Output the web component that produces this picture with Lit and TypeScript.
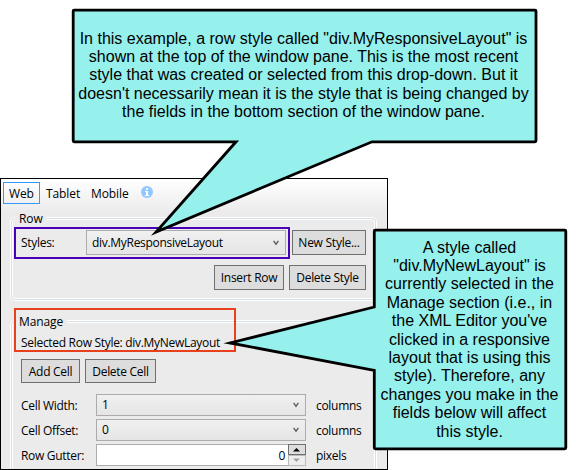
import { LitElement, html, css, svg } from "lit";
import { customElement, property } from "lit/decorators.js";

const topNote = [
  'In this example, a row style called "div.MyResponsiveLayout" is',
  "shown at the top of the window pane. This is the most recent",
  "style that was created or selected from this drop-down. But it",
  "doesn't necessarily mean it is the style that is being changed by",
  "the fields in the bottom section of the window pane.",
];
const sideNote = [
  "A style called",
  '"div.MyNewLayout" is',
  "currently selected in the",
  "Manage section (i.e., in",
  "the XML Editor you've",
  "clicked in a responsive",
  "layout that is using this",
  "style). Therefore, any",
  "changes you make in the",
  "fields below will affect",
  "this style.",
];

const bubbles = [
  "M74.2 10.2H535Q536 10.2 536 11.2V140.8Q536 141.8 535 141.8H372L156 232L236 141.8H74.2Q73.2 141.8 73.2 140.8V11.2Q73.2 10.2 74.2 10.2Z",
  "M375.300 230.2H564.800Q565.800 230.2 565.800 231.2V447.800Q565.800 448.800 564.800 448.800H375.300Q374.300 448.800 374.300 447.800V370.300L230 343L374.300 307V231.2Q374.300 230.2 375.300 230.2Z",
];

@customElement("drop-down")
class DropDown extends LitElement {
  @property() value = "";
  static styles = css`
    :host { display: flex; align-items: center; justify-content: space-between; box-sizing: border-box;
      border: 1px solid #acacac; background: linear-gradient(#f0f0f0, #e5e5e5); padding: 0 6px 0 5px; }
    svg { display: block; }
  `;
  render() {
    return html`<span>${this.value}</span><svg width="6" height="6" viewBox="0 0 6 6"><path d="M.6 .8 L3 4.2 L5.4 .8" fill="none" stroke="#606060" stroke-width="1.4"/></svg>`;
  }
}

@customElement("app-root")
class AppRoot extends LitElement {
  static styles = css`
    :host { display: block; position: relative; width: 576px; height: 470px; overflow: hidden; background: #fff;
      color: #000; font: 12px/16px "Open Sans", "Noto Sans", sans-serif; letter-spacing: -0.3px; white-space: nowrap; padding-top: 178px; box-sizing: border-box; }
    .window { box-sizing: border-box; width: 388px; height: 292px; border: 1px solid #000; overflow: hidden;
      background: linear-gradient(#fff, #ebebeb 34px); padding: 3px 11px 0 2px; }
    .tabs { display: flex; align-items: center; height: 22px; letter-spacing: -0.1px; }
    .tab { box-sizing: border-box; height: 22px; width: 45px; padding: 3px 5px 1px; border: 1px solid transparent; }
    .tab.on { border-color: #3399ff; width: 37px; }
    .info { margin-left: 11px; margin-top: -3px; }
    .group { position: relative; margin-left: 8px; border: 1px solid #d5dfe5; border-radius: 4px; box-shadow: inset 0 0 0 1px #fff, 0 0 0 1px #fff; box-sizing: border-box; width: 365px; }
    .row-group { height: 82px; margin-top: 14px; padding: 8px 9px 0 2px; }
    .manage { height: 170px; margin-top: 21px; padding: 8px 8px 0 9px; }
    .legend { position: absolute; left: 3px; top: -9px; padding: 0 4px; background: #ebebeb; line-height: 17px; letter-spacing: -0.1px; }
    .styles-row { display: flex; align-items: center; }
    .purple { box-sizing: border-box; width: 276px; height: 32px; border: 2px solid #4800b8; display: flex; padding: 1px 2px 0 5px; justify-content: space-between; line-height: 26px; }
    .purple drop-down { width: 200px; height: 25px; line-height: 16px; }
    button { font: inherit; letter-spacing: inherit; color: inherit; box-sizing: border-box; height: 25px; padding: 1px 0 0; border: 1px solid #707070; background: #ddd; flex: none; }
    .new { width: 74px; margin-left: 2px; margin-top: -1px; letter-spacing: -0.25px; }
    .actions { display: flex; justify-content: flex-end; gap: 5px; margin-top: 6px; }
    .insert { width: 70px; }
    .delete { width: 77px; }
    .selected { margin-top: 5px; }
    .cells { display: flex; gap: 5px; margin-top: 8px; }
    .cells button { height: 24px; }
    .add { width: 59px; }
    .remove { width: 71px; }
    .fields { margin-top: 11px; }
    .field { display: grid; grid-template-columns: 75px 210px 60px; height: 22px; margin-bottom: 3px; line-height: 24px; }
    .field drop-down { height: 22px; line-height: 22px; }
    .unit { padding-left: 10px; }
    .number { box-sizing: border-box; height: 22px; border: 1px solid #acacac; background: #fff; display: flex; justify-content: flex-end; line-height: 22px; }
    .number svg { margin: -1px -1px 0 3px; display: block; }
    .red { position: absolute; left: 14px; top: 308px; width: 222px; height: 44px; border: 2px solid #e8401c; box-sizing: border-box; }
    .bubbles { position: absolute; left: 0; top: 0; }
    .note { position: absolute; font: 16px/18.4px "Liberation Sans", Arial, sans-serif; letter-spacing: 0; text-align: center; }
    .top { left: 74px; top: 29.5px; width: 459px; }
    .side { left: 375px; top: 238.5px; width: 189px; }
  `;

  render() {
    return html`
      <div class="window">
        <div class="tabs">
          <div class="tab on">Web</div><div class="tab">Tablet</div><div class="tab">Mobile</div>
          <svg class="info" width="12" height="12" viewBox="0 0 12 12"><circle cx="6" cy="6" r="6" fill="#90c8ff"/><path d="M5 2h2v2H5z M4 5h3v4h1v1H4V9h1V6H4z" fill="#fff"/></svg>
        </div>
        <div class="group row-group">
          <span class="legend">Row</span>
          <div class="styles-row">
            <div class="purple"><span>Styles:</span><drop-down value="div.MyResponsiveLayout"></drop-down></div>
            <button class="new">New Style...</button>
          </div>
          <div class="actions"><button class="insert">Insert Row</button><button class="delete">Delete Style</button></div>
        </div>
        <div class="group manage">
          <span class="legend">Manage</span>
          <div class="selected">Selected Row Style: div.MyNewLayout</div>
          <div class="cells"><button class="add">Add Cell</button><button class="remove">Delete Cell</button></div>
          <div class="fields">
            <div class="field"><span>Cell Width:</span><drop-down value="1"></drop-down><span class="unit">columns</span></div>
            <div class="field"><span>Cell Offset:</span><drop-down value="0"></drop-down><span class="unit">columns</span></div>
            <div class="field"><span>Row Gutter:</span>
              <div class="number">0<svg width="18" height="22" viewBox="0 0 18 22"><rect x=".5" y=".5" width="17" height="10" fill="#ddd" stroke="#707070"/><path d="M5 7.500L8.500 4L12 7.500z" fill="#000"/><rect x=".5" y="11.5" width="17" height="10" fill="#eee" stroke="#bbb"/><path d="M5 14.500L8.500 18L12 14.500z" fill="#a0a0a0"/></svg></div>
              <span class="unit">pixels</span></div>
          </div>
        </div>
      </div>
      <div class="red"></div>
      <svg class="bubbles" width="576" height="470" viewBox="0 0 576 470">
        ${bubbles.map((d) => svg`<path d=${d} fill="#96f0ec" stroke="#000" stroke-width="2.8" stroke-miterlimit="10"/>`)}
      </svg>
      <div class="note top">${topNote.map((t) => html`<div>${t}</div>`)}</div>
      <div class="note side">${sideNote.map((t) => html`<div>${t}</div>`)}</div>
    `;
  }
}
